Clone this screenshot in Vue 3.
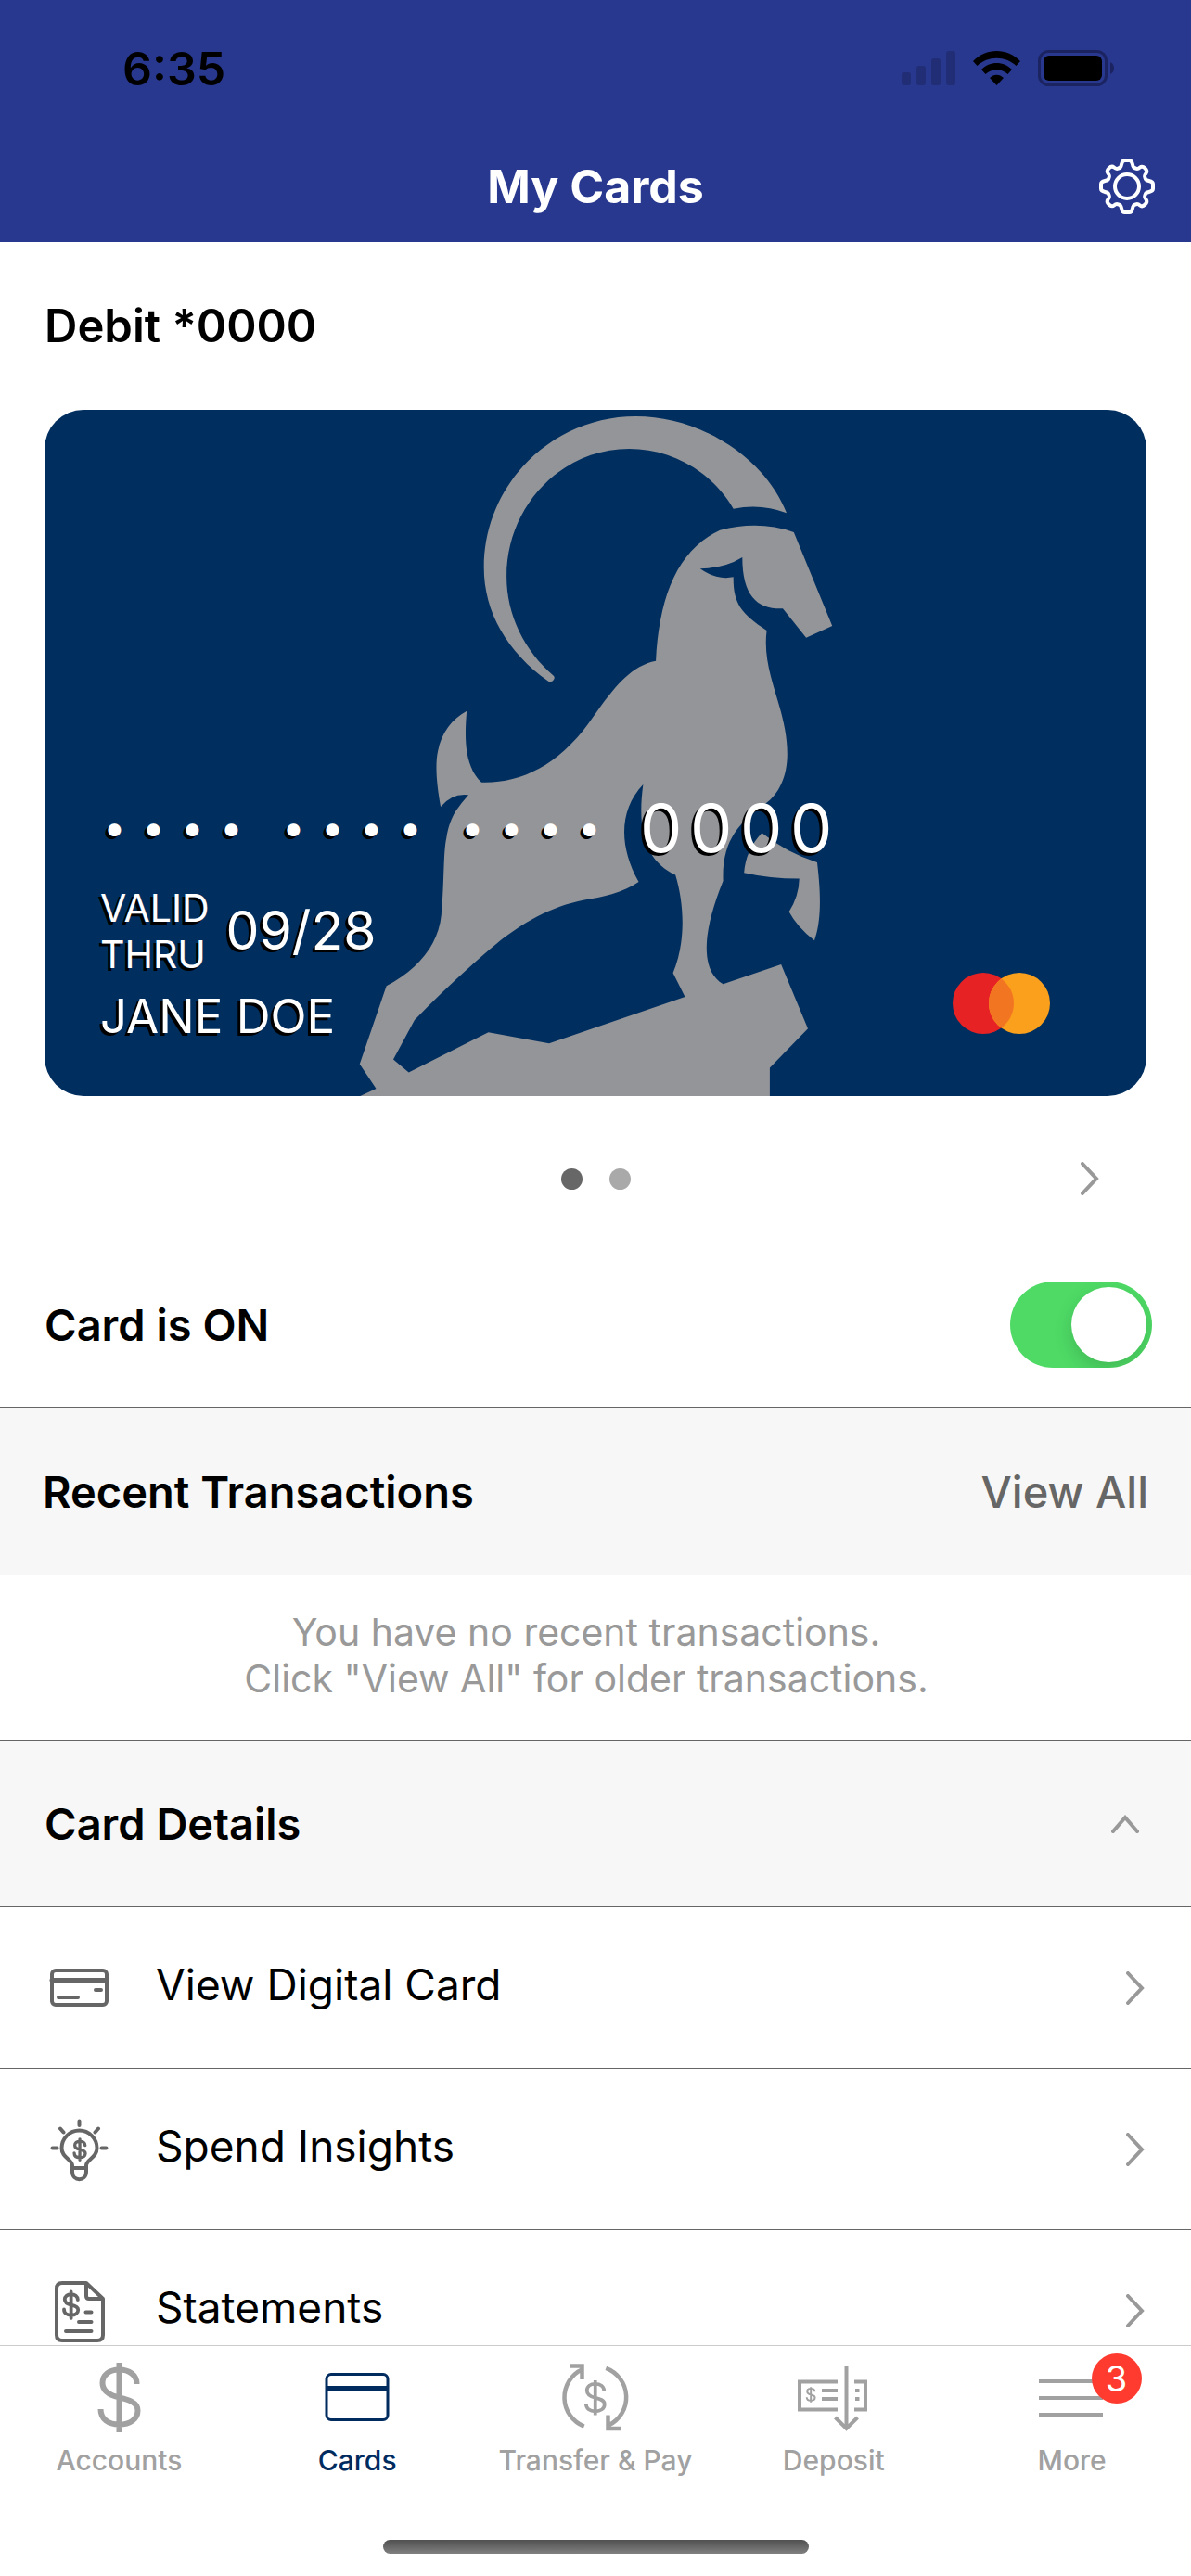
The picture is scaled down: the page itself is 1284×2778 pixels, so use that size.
<script setup>

import { ref } from 'vue';

const cardOn = ref(true);
const detailsOpen = ref(true);
const activeTab = ref('cards');

// masked groups of the card number
const masked = [1, 2, 3];
const lastDigits = '0000'.split('');

const details = [
  { id: 'digital', label: 'View Digital Card' },
  { id: 'insights', label: 'Spend Insights' },
  { id: 'statements', label: 'Statements' },
];

const tabs = [
  { id: 'accounts', label: 'Accounts' },
  { id: 'cards', label: 'Cards' },
  { id: 'transfer', label: 'Transfer & Pay' },
  { id: 'deposit', label: 'Deposit' },
  { id: 'more', label: 'More', badge: 3 },
];

// shared dollar sign, drawn in a 76x76 box
const dollar = 'M57.5 24C57.5 14 49 8.5 38.5 8.5S20.5 14 20.5 23C20.5 33 30 36.5 38.5 38.5S58.5 43 58.5 52.5C58.5 62 50 67.5 38.5 67.5S18.5 62 18.5 51M38.5 1V76';
</script>

<template>
  <div class="app">
    <header class="header">
      <div class="status">
        <span class="time">6:35</span>
        <svg class="status-icons" viewBox="0 0 230 40" aria-hidden="true">
          <g fill="#212d74">
            <rect x="0" y="24" width="10" height="14" rx="3" />
            <rect x="16" y="17" width="10" height="21" rx="3" />
            <rect x="32" y="9" width="10" height="29" rx="3" />
            <rect x="48" y="1" width="10" height="37" rx="3" />
          </g>
          <path d="M77 12C91-2.6 114-2.6 128 12L123.5 17C112 6 93 6 81.5 17ZM86 21C95 11.5 110 11.5 119 21L114.5 26C108 19.5 97 19.5 90.5 26ZM95 30C99.5 25.5 105.5 25.5 110 30L102.5 38Z" />
          <rect x="148.5" y="1.5" width="72" height="36" rx="10" fill="none" stroke="#1b2461" stroke-width="3" />
          <rect x="153" y="6" width="63" height="27" rx="6" />
          <path d="M225 13Q229 15 229 19.5T225 26Z" fill="#1b2461" />
        </svg>
      </div>
      <div class="nav">
        <h1>My Cards</h1>
        <button class="gear" type="button" aria-label="Settings">
          <svg viewBox="-32 -32 64 64">
            <circle r="13" />
            <path v-for="turn in 4" :key="turn" :transform="`rotate(${turn * 90})`"
              d="M0 -28H2.5C7 -28 5 -21 8 -20C11 -19 11 -18 14 -20.5Q16.5 -22.5 19.5 -19.5T20.5 -14C18 -11 19 -11 20 -8C21 -5 28 -7 28 -2.5V0" />
          </svg>
        </button>
      </div>
    </header>

    <main class="content">
      <h2 class="card-title">Debit *0000</h2>

      <section class="bank-card">
        <svg class="goat" viewBox="0 0 1188 740" aria-hidden="true">
          <g transform="translate(312 -12) scale(0.37 0.3333)" fill="#949599" fill-rule="evenodd">
            <path d="M1319 370C1250 180 1060 57 880 57C636 57 437 276 437 545C437 690 505 820 625 914C635 922 648 905 640 896C555 815 503 700 503 575C503 347 663 162 860 162C985 162 1100 235 1164 356Q1245 338 1319 370Z" />
            <path d="M1340 432L1452 735L1376 773L1308 679C1235 682 1190 640 1190 513Q1140 548 1067 550Q1115 588 1164 577C1163 660 1185 695 1261 750C1245 890 1321 1000 1321 1150C1321 1225 1295 1280 1258 1310C1180 1372 1130 1430 1134 1560C1075 1720 1065 1850 1134 1894L1303 1830L1381 2038L1270 2165V2270H50L123 2232L75 2153L153 1900C240 1850 305 1770 313 1670C322 1560 318 1470 328 1420C338 1355 355 1330 392 1282Q345 1275 311 1320C298 1240 295 1180 303 1140C313 1080 345 1035 387 1010C380 1100 380 1190 430 1241C540 1245 650 1190 742 1050C800 960 855 865 938 848C948 640 1000 490 1125 425Q1240 393 1340 432ZM901 1248C830 1330 830 1450 888 1563C840 1600 780 1612 730 1622C620 1645 530 1710 450 1785Q330 1900 235 2010L173 2138L218 2180L450 2050L627 2086L1023 1935L988 1858C1025 1760 1022 1640 995 1541C920 1500 880 1420 901 1248Z" />
            <path d="M1247 1405Q1320 1470 1408 1500C1420 1610 1420 1690 1400 1753Q1350 1710 1326 1660Q1355 1610 1356 1553Q1270 1553 1195 1534Q1200 1460 1247 1405Z" />
          </g>
        </svg>

        <div class="card-text">
          <div class="card-number">
            <span v-for="group in masked" :key="group" class="group">
              <span v-for="n in 4" :key="n" class="dot">•</span>
            </span>
            <span class="group">
              <span v-for="(digit, i) in lastDigits" :key="i" class="digit">{{ digit }}</span>
            </span>
          </div>
          <div class="valid">
            <span class="valid-label">VALID<br>THRU</span>
            <span class="valid-date">09/28</span>
          </div>
          <div class="holder">JANE DOE</div>
        </div>

        <svg class="network" viewBox="0 0 105 66" role="img" aria-label="Mastercard">
          <circle cx="33" cy="33" r="33" fill="#e72224" />
          <circle cx="72" cy="33" r="33" fill="#faa01c" />
          <path d="M52.5 6.4A33 33 0 0 1 52.5 59.6A33 33 0 0 1 52.5 6.4Z" fill="#f27621" />
        </svg>
      </section>

      <div class="pager">
        <div class="pages">
          <button type="button" class="page current" aria-label="Card 1"></button>
          <button type="button" class="page" aria-label="Card 2"></button>
        </div>
        <button type="button" class="next" aria-label="Next card">
          <svg class="chevron" viewBox="0 0 20 36"><path d="M2 2L17 18L2 34" /></svg>
        </button>
      </div>

      <div class="power">
        <label for="card-on">Card is ON</label>
        <input id="card-on" v-model="cardOn" class="toggle" type="checkbox" role="switch">
      </div>

      <div class="section-bar">
        <h2>Recent Transactions</h2>
        <a href="#" class="view-all">View All</a>
      </div>
      <p class="empty">You have no recent transactions.<br>Click "View All" for older transactions.</p>

      <button type="button" class="section-bar" :aria-expanded="detailsOpen" @click="detailsOpen = !detailsOpen">
        <span>Card Details</span>
        <svg class="chevron-up" viewBox="0 0 30 20"><path d="M2 18L15 3L28 18" /></svg>
      </button>

      <ul v-if="detailsOpen" class="details">
        <li v-for="item in details" :key="item.id">
          <a href="#" class="row">
            <svg class="row-icon" viewBox="0 0 72 72" aria-hidden="true">
              <g v-if="item.id === 'digital'">
                <rect x="6" y="17" width="59" height="37" rx="4" />
                <path d="M6 27.5H65" stroke-width="5" />
                <path d="M53 38H59M13 46H34" />
              </g>
              <g v-else-if="item.id === 'insights'">
                <path d="M35.5 5.5V10M15 13.5L18.5 17.5M56 13.5L52.5 17.5M6.5 34.5H11.5M59.5 34.5H64.5" />
                <path d="M28 56V53C27 46 16.5 45 16.5 34.5A19 19 0 0 1 54.5 34.5C54.5 45 44 46 43 53V56ZM28 56V60C28 71 43 71 43 60V56" />
                <path :d="dollar" transform="translate(24.5 24.5) scale(0.3)" stroke-width="11" />
              </g>
              <g v-else>
                <path d="M43 6H17Q11 6 11 12V62Q11 68 17 68H55Q61 68 61 62V23ZM43 6V20Q43 23 46 23H61" />
                <path :d="dollar" transform="translate(12 15) scale(0.38)" stroke-width="10" />
                <path d="M42.5 37.5H48.5M35 48H48.5M21 58H48.5" />
              </g>
            </svg>
            <span class="row-label">{{ item.label }}</span>
            <svg class="chevron" viewBox="0 0 20 36"><path d="M2 2L17 18L2 34" /></svg>
          </a>
        </li>
      </ul>
    </main>

    <nav class="tab-bar">
      <div class="tabs">
        <button v-for="tab in tabs" :key="tab.id" type="button" class="tab"
          :class="{ active: activeTab === tab.id }" @click="activeTab = tab.id">
          <span class="tab-icon">
            <svg viewBox="0 0 76 76" aria-hidden="true">
              <path v-if="tab.id === 'accounts'" :d="dollar" stroke-width="6" />
              <g v-else-if="tab.id === 'cards'">
                <rect x="5" y="13.5" width="66" height="49" rx="5" stroke-width="3" />
                <path d="M5 29H71" stroke-width="6" />
              </g>
              <g v-else-if="tab.id === 'transfer'" stroke-width="4.5">
                <path d="M25.7 69.6A33.5 33.5 0 0 1 24 8M10 4.5H23.5V19" />
                <path d="M49.3 6.8A33.5 33.5 0 0 1 52 68.5M51.5 57.5V72H65" />
                <path :d="dollar" transform="translate(18.5 19.5) scale(0.5)" stroke-width="7.5" />
              </g>
              <g v-else-if="tab.id === 'deposit'" stroke-width="4">
                <path d="M42 21.5H1V51.5H42M60 21.5H72V51.5H60M25 31H42M25 40H42M61 31H65.5M61 40H65.5" />
                <path d="M51.5 4V70M39.5 60L51.5 72L63.5 60" />
                <path :d="dollar" transform="translate(4.7 27) scale(0.22)" stroke-width="9" />
              </g>
              <path v-else d="M2 21H71M2 39H71M2 57H71" stroke-width="4" />
            </svg>
            <span v-if="tab.badge" class="badge">{{ tab.badge }}</span>
          </span>
          <span>{{ tab.label }}</span>
        </button>
      </div>
      <div class="home-indicator"></div>
    </nav>
  </div>
</template>

<style>
body {
  margin: 0;
  background: #ffffff;
}
</style>

<style scoped>
.app {
  display: flex;
  flex-direction: column;
  height: 100vh;
  font-family: Inter, "Liberation Sans", sans-serif;
  color: #000000;
  background: #ffffff;
}

button {
  padding: 0;
  border: none;
  background: none;
  font-family: inherit;
  cursor: pointer;
}

a {
  color: inherit;
  text-decoration: none;
}

h1,
h2,
p,
ul {
  margin: 0;
  padding: 0;
}

svg {
  display: block;
}

/* Header */
.header {
  flex: none;
  background: #28388f;
}

.status {
  display: flex;
  justify-content: space-between;
  align-items: center;
  height: 147px;
  padding: 0 82px 0 132px;
}

.time {
  font-size: 50px;
  font-weight: 600;
}

.status-icons {
  width: 230px;
  height: 40px;
}

.nav {
  display: grid;
  grid-template-columns: 1fr auto 1fr;
  align-items: center;
  height: 114px;
  padding: 0 37px 6px;
  box-sizing: border-box;
}

h1 {
  grid-column: 2;
  font-size: 50px;
  line-height: 60px;
  font-weight: 700;
  color: #ffffff;
}

.gear {
  justify-self: end;
}

.gear svg {
  width: 64px;
  height: 64px;
  fill: none;
  stroke: #ffffff;
  stroke-width: 4;
}

/* Card */
.content {
  flex: 1;
  min-height: 0;
  overflow: hidden;
}

.card-title {
  display: flex;
  align-items: center;
  height: 181px;
  padding: 0 48px;
  font-size: 49px;
  font-weight: 600;
}

.bank-card {
  position: relative;
  display: flex;
  justify-content: space-between;
  align-items: flex-end;
  aspect-ratio: 1188 / 740;
  margin: 0 48px;
  padding: 0 104px 56px 60px;
  box-sizing: border-box;
  border-radius: 42px;
  overflow: hidden;
  background: #002f5f;
}

.goat {
  position: absolute;
  inset: 0;
  width: 100%;
  height: 100%;
}

.card-text {
  position: relative;
  color: #ffffff;
  text-shadow: -3px 3px 0 #000000;
}

.card-number {
  display: flex;
  align-items: center;
  gap: 25px;
  height: 80px;
  margin-bottom: 22px;
  padding-left: 3px;
}

.group {
  display: flex;
  align-items: center;
}

.dot {
  width: 42px;
  font-size: 44px;
}

.digit {
  width: 54px;
  font-size: 72px;
}

.valid {
  display: flex;
  align-items: center;
  gap: 18px;
  margin-bottom: 12px;
}

.valid-label {
  font-size: 41px;
  line-height: 50px;
}

.valid-date {
  font-size: 57px;
  line-height: 60px;
}

.holder {
  font-size: 51px;
  line-height: 60px;
}

.network {
  position: relative;
  width: 105px;
  height: 66px;
  margin-bottom: 11px;
}

/* Pager */
.pager {
  display: grid;
  grid-template-columns: 1fr auto 1fr;
  align-items: center;
  height: 158px;
  padding: 20px 99px 0;
  box-sizing: border-box;
}

.pages {
  grid-column: 2;
  display: flex;
  gap: 29px;
}

.page {
  width: 23px;
  height: 23px;
  border-radius: 50%;
  background: #a9a9a9;
}

.page.current {
  background: #676767;
}

.next {
  justify-self: end;
}

.chevron {
  width: 20px;
  height: 36px;
  fill: none;
  stroke: #999999;
  stroke-width: 4;
  stroke-linecap: round;
}

/* On/off switch */
.power {
  display: flex;
  justify-content: space-between;
  align-items: center;
  height: 177px;
  padding: 0 42px 0 48px;
  font-size: 47px;
  font-weight: 600;
}

.toggle {
  appearance: none;
  display: flex;
  align-items: center;
  width: 153px;
  height: 93px;
  margin: 0;
  padding: 6px;
  box-sizing: border-box;
  border-radius: 47px;
  overflow: hidden;
  background: #dddddd;
  cursor: pointer;
}

.toggle::before {
  content: "";
  width: 81px;
  height: 81px;
  border-radius: 50%;
  background: #ffffff;
  box-shadow: 0 8px 20px rgba(0, 0, 0, 0.15);
}

.toggle:checked {
  justify-content: flex-end;
  background: #4eda65;
}

/* Section bars */
.section-bar {
  display: flex;
  justify-content: space-between;
  align-items: center;
  width: 100%;
  height: 182px;
  padding: 0 46px;
  box-sizing: border-box;
  border-top: 1px solid #666666;
  background: #f7f7f7;
  color: #000000;
  font-size: 47px;
  font-weight: 600;
}

button.section-bar {
  height: 180px;
  padding: 0 56px 0 48px;
}

.section-bar h2 {
  font-size: 47px;
  font-weight: 600;
}

.view-all {
  color: #666666;
  font-weight: 500;
}

.empty {
  padding: 36px 68px 41px 48px;
  color: #999999;
  font-size: 41px;
  line-height: 50px;
  text-align: center;
}

.chevron-up {
  width: 30px;
  height: 20px;
  fill: none;
  stroke: #999999;
  stroke-width: 4;
  stroke-linecap: round;
}

/* Card details */
.details {
  list-style: none;
}

.row {
  display: flex;
  align-items: center;
  height: 174px;
  padding: 0 50px;
  box-sizing: border-box;
  border-top: 1px solid #666666;
  font-size: 46px;
}

.row-icon {
  width: 72px;
  height: 72px;
  margin-right: 46px;
  fill: none;
  stroke: #666666;
  stroke-width: 4;
  stroke-linecap: round;
  stroke-linejoin: round;
}

.row-label {
  flex: 1;
  padding-bottom: 8px;
}

/* Tab bar */
.tab-bar {
  flex: none;
  border-top: 1px solid #cccccc;
  background: #ffffff;
}

.tabs {
  display: grid;
  grid-template-columns: repeat(5, 1fr);
  padding-top: 17px;
}

.tab {
  display: flex;
  flex-direction: column;
  align-items: center;
  gap: 12px;
  color: #a1a1a1;
  font-size: 30px;
  line-height: 36px;
  font-weight: 500;
}

.tab.active {
  color: #002b5f;
}

.tab-icon {
  position: relative;
}

.tab-icon svg {
  width: 76px;
  height: 76px;
  overflow: visible;
  fill: none;
  stroke: currentColor;
}

.badge {
  position: absolute;
  top: -9px;
  left: 59px;
  width: 54px;
  border-radius: 50%;
  background: #ff3b30;
  color: #ffffff;
  font-size: 38px;
  font-weight: 400;
  line-height: 54px;
  text-align: center;
}

.home-indicator {
  width: 459px;
  height: 15px;
  margin: 68px auto 24px;
  border-radius: 8px;
  background: linear-gradient(#505050, #808080);
}
</style>
